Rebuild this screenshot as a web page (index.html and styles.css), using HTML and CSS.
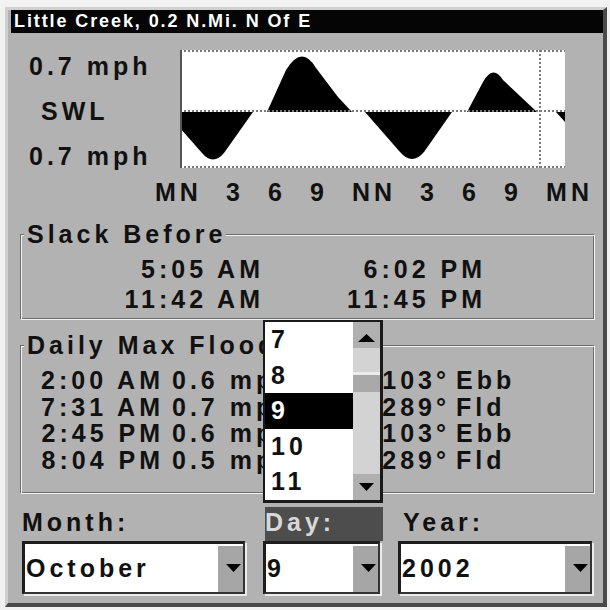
FILE: index.html
```html
<!DOCTYPE html>
<html>
<head>
<meta charset="utf-8">
<link rel="stylesheet" href="styles.css">
</head>
<body>
<div class="screen">
  <div class="titlebar">Little Creek, 0.2 N.Mi. N Of E</div>
  <div class="graph-row">
    <div class="ylabels">
      <div class="yl">0.7 mph</div>
      <div class="yl swl">SWL</div>
      <div class="yl">0.7 mph</div>
    </div>
    <svg class="tide" width="385" height="118" viewBox="0 0 385 118">
      <rect width="385" height="118" fill="#fff"/>
      <g fill="#000">
        <path d="M0,62 L0,78 L22,103 Q33,116 44,103 L73,62 Z"/>
        <path d="M87,62 L106,20 Q122,-6 136,18 L158,47 L172,62 Z"/>
        <path d="M185,62 L220,102 Q232,116 244,102 L272,62 Z"/>
        <path d="M287,62 L303,32 Q313,14 323,30 L357,62 Z"/>
        <path d="M376,62 L385,62 L385,72 Z"/>
      </g>
      <g stroke="#7a7a7a" stroke-width="2" stroke-dasharray="2 2">
        <line x1="0" y1="1" x2="385" y2="1"/>
        <line x1="0" y1="117" x2="385" y2="117"/>
        <line x1="0" y1="61" x2="385" y2="61"/>
        <line x1="360" y1="0" x2="360" y2="118"/>
      </g>
      <rect width="2" height="118" fill="#555"/>
    </svg>
  </div>
  <div class="xaxis"><span>MN</span><span>3</span><span>6</span><span>9</span><span>NN</span><span>3</span><span>6</span><span>9</span><span>MN</span></div>

  <fieldset class="box slack">
    <legend>Slack Before</legend>
    <div class="slack-grid">
      <span>5:05 AM</span><span>6:02 PM</span>
      <span>11:42 AM</span><span>11:45 PM</span>
    </div>
  </fieldset>

  <fieldset class="box daily">
    <legend>Daily Max Flood/Ebbs:</legend>
    <div class="daily-grid">
      <span class="t">2:00 AM</span><span>0.6 mph</span><span class="d">103°</span><span>Ebb</span>
      <span class="t">7:31 AM</span><span>0.7 mph</span><span class="d">289°</span><span>Fld</span>
      <span class="t">2:45 PM</span><span>0.6 mph</span><span class="d">103°</span><span>Ebb</span>
      <span class="t">8:04 PM</span><span>0.5 mph</span><span class="d">289°</span><span>Fld</span>
    </div>
  </fieldset>

  <div class="pickers">
    <div class="label">Month:</div>
    <div class="label day-label">Day:</div>
    <div class="label year-label">Year:</div>
    <div class="combo month"><span class="val">October</span><span class="btn"><svg width="25" height="46" viewBox="0 0 25 46"><polygon points="8,18 23,18 15.5,26" fill="#000"/></svg></span></div>
    <div class="combo dayc"><span class="val">9</span><span class="btn"><svg width="25" height="46" viewBox="0 0 25 46"><polygon points="8,18 23,18 15.5,26" fill="#000"/></svg></span></div>
    <div class="combo yearc"><span class="val">2002</span><span class="btn"><svg width="25" height="46" viewBox="0 0 25 46"><polygon points="8,18 23,18 15.5,26" fill="#000"/></svg></span></div>
  </div>

  <div class="daylist">
    <div class="items">
      <div class="item">7</div>
      <div class="item">8</div>
      <div class="item sel">9</div>
      <div class="item">10</div>
      <div class="item">11</div>
    </div>
    <div class="sb">
      <div class="arrow"><svg width="27" height="26" viewBox="0 0 27 26"><polygon points="5,20 22,20 13.5,12" fill="#000"/></svg></div>
      <div class="track"><div class="thumb"></div></div>
      <div class="arrow"><svg width="27" height="26" viewBox="0 0 27 26"><polygon points="6,9 21,9 13.5,17" fill="#000"/></svg></div>
    </div>
  </div>
</div>
</body>
</html>
```

FILE: styles.css
```css
html, body {
  margin: 0;
  background: #f2f2f2;
  overflow: hidden;
}
body {
  font-family: "Liberation Sans", Arial, sans-serif;
  color: #111;
}
.screen {
  position: relative;
  box-sizing: border-box;
  width: 602px;
  height: 600px;
  margin: 7px 0 0 5px;
  background: #b2b2b2;
  border-style: solid;
  border-width: 3px 4px 4px 3px;
  border-color: #d0d0d0 #4a4a4a #4a4a4a #d0d0d0;
  padding-left: 3px;
  font-size: 25px;
  font-weight: bold;
  letter-spacing: 4px;
}
.titlebar {
  height: 23px;
  line-height: 23px;
  background: #050505;
  color: #fff;
  font-size: 18px;
  letter-spacing: 1.9px;
  padding-left: 3px;
  white-space: nowrap;
  overflow: hidden;
}
.graph-row {
  display: flex;
  margin-top: 17px;
  height: 118px;
}
.ylabels {
  flex: none;
  width: 169px;
  height: 112px;
  margin-top: -6px;
  line-height: 45px;
}
.yl {
  padding-left: 18px;
  white-space: nowrap;
}
.yl.swl {
  padding-left: 30px;
}
.tide {
  display: block;
  flex: none;
}
.xaxis {
  display: flex;
  justify-content: space-between;
  margin: 11px 0 0 144px;
  width: 438px;
  line-height: 26px;
}
.box {
  margin: 16px 8px 0 9px;
  padding: 7px 0 5px 0;
  min-width: 0;
  border: 1px solid;
  border-color: #6e6e6e #f2f2f2 #f2f2f2 #6e6e6e;
  box-shadow: inset 1px 1px 0 #f2f2f2, inset -1px -1px 0 #6e6e6e;
}
.box legend {
  padding: 0 0 0 3px;
  margin-left: 3px;
  line-height: 26px;
  background: #b2b2b2;
  white-space: nowrap;
}
.slack {
  margin-top: 16px;
  padding: 7px 0 5px 0;
}
.slack-grid {
  display: grid;
  grid-template-columns: 243px 222px;
  line-height: 30px;
  text-align: right;
  white-space: nowrap;
}
.daily {
  margin-top: 12px;
  padding: 9px 0 19px 0;
}
.daily-grid {
  display: grid;
  grid-template-columns: 151px 200px 84px auto;
  line-height: 26.67px;
  white-space: nowrap;
}
.daily-grid .t {
  text-align: right;
  padding-right: 8px;
}
.daily-grid .d {
  text-align: right;
  padding-right: 6px;
}
.pickers {
  display: grid;
  grid-template-columns: 241px 135px 194px;
  grid-template-rows: 34px 53px;
  margin: 13px 0 0 11px;
}
.label {
  line-height: 30px;
  white-space: nowrap;
}
.day-label {
  box-sizing: border-box;
  width: 118px;
  margin-left: 2px;
  background: #4d4d4d;
  color: #d8d8d8;
}
.year-label {
  padding-left: 5px;
}
.combo {
  display: flex;
  box-sizing: border-box;
  height: 53px;
  background: #fff;
  border-style: solid;
  border-width: 3px 2px 2px 3px;
  border-color: #1e1e1e #333 #333 #1e1e1e;
  box-shadow: 2px 2px 0 #ececec;
}
.combo .val {
  flex: 1;
  line-height: 48px;
  padding-left: 1px;
  white-space: nowrap;
  overflow: hidden;
}
.combo .btn {
  flex: none;
  width: 25px;
  height: 46px;
  margin-top: 2px;
  background: #a6a6a6;
}
.combo svg {
  display: block;
}
.month { width: 223px; }
.dayc { width: 117px; }
.yearc { width: 194px; }

.daylist {
  position: absolute;
  left: 255px;
  top: 310px;
  width: 120px;
  height: 183px;
  box-sizing: border-box;
  display: flex;
  background: #fff;
  border: 2px solid #1a1a1a;
  border-right-width: 3px;
  border-bottom-width: 3px;
}
.items {
  width: 88px;
  flex: none;
}
.item {
  height: 35.6px;
  line-height: 35.6px;
  padding-left: 6px;
}
.item.sel {
  background: #000;
  color: #fff;
}
.sb {
  width: 27px;
  flex: none;
  display: flex;
  flex-direction: column;
  background: #d3d3d3;
}
.sb .arrow {
  height: 26px;
  background: #b0b0b0;
}
.sb svg {
  display: block;
}
.sb .track {
  flex: 1;
}
.thumb {
  margin-top: 24px;
  height: 17px;
  border-top: 3px solid #ececec;
  background: #a9a9a9;
}
```
